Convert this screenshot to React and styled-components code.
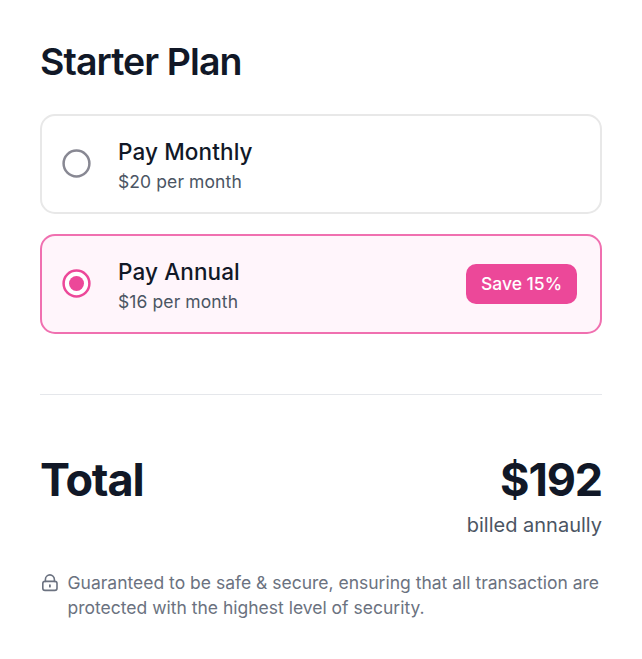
import React from "react";
import styled, { createGlobalStyle } from "styled-components";

const Global = createGlobalStyle`
  * { box-sizing: border-box; }
  body { margin: 0; background: #fff; font-family: Inter, sans-serif; color: #111827; }
`;
const Page = styled.main`
  width: 642px; height: 659px; padding: 38px 40px 0; overflow: hidden;
`;
const Title = styled.h1`
  margin: 0 0 29px; font-size: 37.5px; line-height: 47px; font-weight: 600; letter-spacing: -0.94px;
`;
const Options = styled.div`
  display: flex; flex-direction: column; gap: 20px;
`;
const Option = styled.label`
  display: flex; align-items: center; height: 100px; padding: 0 23px 0 20px;
  border: 2px solid ${(p) => (p.$selected ? "#f070b0" : "#e8e8e8")};
  border-radius: 15px; background: ${(p) => (p.$selected ? "#fff5fb" : "#fff")};
`;
const Radio = styled.svg`
  width: 29px; height: 29px; margin: 0 27px 1px 0; color: ${(p) => (p.$selected ? "#ec4899" : "#888893")};
`;
const Details = styled.div`
  flex: 1; padding-top: 3px;
`;
const Name = styled.div`
  font-size: 22.5px; line-height: 32px; font-weight: 500; letter-spacing: 0.12px;
`;
const Price = styled.div`
  font-size: 17.5px; line-height: 27px; color: #4b5563; letter-spacing: 0.1px;
`;
const Badge = styled.span`
  display: flex; align-items: center; justify-content: center; width: 111px; height: 40px; padding-bottom: 2px;
  border-radius: 10px; background: #ec4899; color: #fff; font-size: 17.5px; font-weight: 500;
`;
const Divider = styled.hr`
  height: 1px; margin: 60px 0 56px; border: 0; background: #e5e7eb;
`;
const Summary = styled.section`
  display: flex; justify-content: space-between; height: 90px;
`;
const Big = styled.div`
  font-size: 45px; line-height: 58px; font-weight: 700; letter-spacing: -1.125px;
`;
const Amount = styled.div`
  text-align: right;
`;
const Billing = styled.div`
  font-size: 20px; line-height: 32px; color: #4b5563;
`;
const Notice = styled.footer`
  display: flex; margin-top: 29px; color: #6b7280; font-size: 17.5px; line-height: 25px;
`;
const Lock = styled.svg`
  width: 20px; height: 20px; margin: 3px 7.5px 0 0; flex: none;
`;

function PlanOption({ name, price, selected, badge }) {
  return (
    <Option $selected={selected}>
      <Radio $selected={selected} viewBox="0 0 29 29">
        <circle cx="14.5" cy="14.5" r="12.9" fill="#fff" stroke="currentColor" strokeWidth="2.5" />
        {selected && <circle cx="14.5" cy="14.5" r="7.5" fill="currentColor" />}
      </Radio>
      <Details>
        <Name>{name}</Name>
        <Price>{price}</Price>
      </Details>
      {badge && <Badge>{badge}</Badge>}
    </Option>
  );
}

export default function App() {
  return (
    <Page>
      <Global />
      <Title>Starter Plan</Title>
      <Options>
        <PlanOption name="Pay Monthly" price="$20 per month" />
        <PlanOption name="Pay Annual" price="$16 per month" badge="Save 15%" selected />
      </Options>
      <Divider />
      <Summary>
        <Big>Total</Big>
        <Amount>
          <Big>$192</Big>
          <Billing>billed annaully</Billing>
        </Amount>
      </Summary>
      <Notice>
        <Lock viewBox="0 0 20 20" fill="none" stroke="currentColor" strokeWidth="1.6" strokeLinecap="round">
          <rect x="2.8" y="8.4" width="14.2" height="9" rx="2.2" />
          <path d="M5.4 8.4V6.4a4.5 4.5 0 0 1 9 0v2" />
          <path d="M9.9 12.1v1.6" strokeWidth="1.8" />
        </Lock>
        <div>
          Guaranteed to be safe &amp; secure, ensuring that all transaction are<br />
          protected with the highest level of security.
        </div>
      </Notice>
    </Page>
  );
}
